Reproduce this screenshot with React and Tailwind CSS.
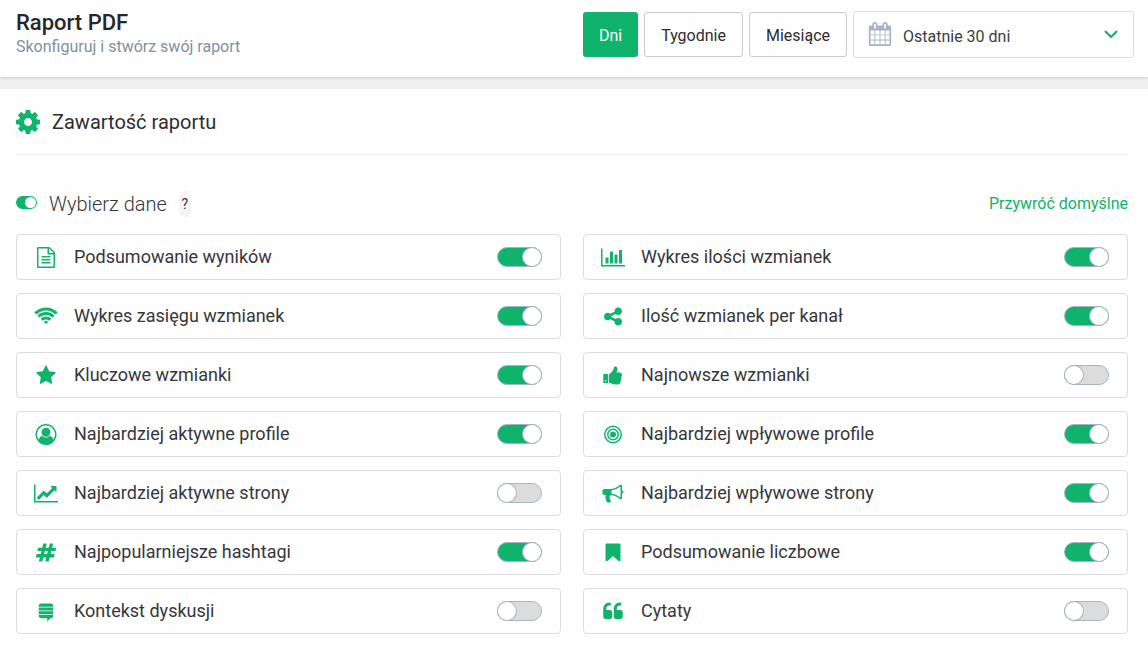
import { useState } from "react";

// viewBox is 1792 high, the wide glyphs are 2048 across
const paths = {
  cog: "M1152 896q0-106-75-181t-181-75-181 75-75 181 75 181 181 75 181-75 75-181zm512-109v222q0 12-8 23t-20 13l-185 28q-19 54-39 91 35 50 107 138 10 12 10 25t-9 23q-27 37-99 108t-94 71q-12 0-26-9l-138-108q-44 23-91 38-16 136-29 186-7 28-36 28h-222q-14 0-24.5-8.5t-11.5-21.5l-28-184q-49-16-90-37l-141 107q-10 9-25 9-14 0-25-11-126-114-165-168-7-10-7-23 0-12 8-23 15-21 51-66.5t54-70.5q-27-50-41-99l-183-27q-13-2-21-12.5t-8-23.5v-222q0-12 8-23t19-13l186-28q14-46 39-92-40-57-107-138-10-12-10-24 0-10 9-23 26-36 98.5-107.5t94.5-71.5q13 0 26 10l138 107q44-23 91-38 16-136 29-186 7-28 36-28h222q14 0 24.5 8.5t11.5 21.5l28 184q49 16 90 37l142-107q9-9 24-9 13 0 25 10 129 119 165 170 7 8 7 22 0 12-8 23-15 21-51 66.5t-54 70.5q26 50 41 98l183 28q13 2 21 12.5t8 23.5z",
  calendar:
    "M192 1664h288v-288h-288v288zm352 0h320v-288h-320v288zm-352-352h288v-320h-288v320zm352 0h320v-320h-320v320zm-352-384h288v-288h-288v288zm736 736h320v-288h-320v288zm-384-736h320v-288h-320v288zm768 736h288v-288h-288v288zm-384-352h320v-320h-320v320zm-352-864v-288q0-13-9.5-22.5t-22.5-9.5h-64q-13 0-22.5 9.5t-9.5 22.5v288q0 13 9.5 22.5t22.5 9.5h64q13 0 22.5-9.5t9.5-22.5zm736 864h288v-320h-288v320zm-384-384h320v-288h-320v288zm384 0h288v-288h-288v288zm32-480v-288q0-13-9.5-22.5t-22.5-9.5h-64q-13 0-22.5 9.5t-9.5 22.5v288q0 13 9.5 22.5t22.5 9.5h64q13 0 22.5-9.5t9.5-22.5zm384-64v1280q0 52-38 90t-90 38h-1408q-52 0-90-38t-38-90v-1280q0-52 38-90t90-38h128v-96q0-66 47-113t113-47h64q66 0 113 47t47 113v96h384v-96q0-66 47-113t113-47h64q66 0 113 47t47 113v96h128q52 0 90 38t38 90z",
  file: "M1596 380q28 28 48 76t20 88v1152q0 40-28 68t-68 28h-1344q-40 0-68-28t-28-68v-1600q0-40 28-68t68-28h896q40 0 88 20t76 48zm-444-244v376h376q-10-29-22-41l-313-313q-12-12-41-22zm384 1528v-1024h-416q-40 0-68-28t-28-68v-416h-768v1536h1280zm-1024-864q0-14 9-23t23-9h704q14 0 23 9t9 23v64q0 14-9 23t-23 9h-704q-14 0-23-9t-9-23v-64zm736 224q14 0 23 9t9 23v64q0 14-9 23t-23 9h-704q-14 0-23-9t-9-23v-64q0-14 9-23t23-9h704zm0 256q14 0 23 9t9 23v64q0 14-9 23t-23 9h-704q-14 0-23-9t-9-23v-64q0-14 9-23t23-9h704z",
  barChart:
    "M640 896v512h-256v-512h256zm384-512v1024h-256v-1024h256zm1024 1152v128h-2048v-1536h128v1408h1920zm-640-896v768h-256v-768h256zm384-384v1152h-256v-1152h256z",
  wifi: "M1024 1523q-20 0-93-73.5t-73-93.5q0-32 62.5-54t103.5-22 103.5 22 62.5 54q0 20-73 93.5t-93 73.5zm270-271q-2 0-40-25t-101.5-50-128.5-25-128.5 25-101 50-40.5 25q-18 0-93.5-75t-75.5-93q0-13 10-23 78-77 196-121t233-44 233 44 196 121q10 10 10 23 0 18-75.5 93t-93.5 75zm273-272q-11 0-23-8-136-105-252-154.5t-268-49.5q-85 0-170.5 22t-149 53-113.5 62-79 53-31 22q-17 0-92-75t-75-93q0-12 10-22 132-132 320-205t380-73 380 73 320 205q10 10 10 22 0 18-75 93t-92 75zm271-271q-11 0-22-9-179-157-371.5-236.5t-420.5-79.5-420.5 79.5-371.5 236.5q-11 9-22 9-17 0-92.5-75t-75.5-93q0-13 10-23 187-186 445-288t527-102 527 102 445 288q10 10 10 23 0 18-75.5 93t-92.5 75z",
  share:
    "M1344 1024q133 0 226.5 93.5t93.5 226.5-93.5 226.5-226.5 93.5-226.5-93.5-93.5-226.5q0-12 2-34l-360-180q-92 86-218 86-133 0-226.5-93.5t-93.5-226.5 93.5-226.5 226.5-93.5q126 0 218 86l360-180q-2-22-2-34 0-133 93.5-226.5t226.5-93.5 226.5 93.5 93.5 226.5-93.5 226.5-226.5 93.5q-126 0-218-86l-360 180q2 22 2 34t-2 34l360 180q92-86 218-86z",
  star: "M1728 647q0 22-26 48l-363 354 86 500q1 7 1 20 0 21-10.5 35.5t-30.5 14.5q-19 0-40-12l-449-236-449 236q-22 12-40 12-21 0-31.5-14.5t-10.5-35.5q0-6 2-20l86-500-364-354q-25-27-25-48 0-37 56-46l502-73 225-455q19-41 49-41t49 41l225 455 502 73q56 9 56 46z",
  thumb:
    "M320 1344q0-26-19-45t-45-19q-27 0-45.5 19t-18.5 45q0 27 18.5 45.5t45.5 18.5q26 0 45-18.5t19-45.5zm160-512v640q0 26-19 45t-45 19h-288q-26 0-45-19t-19-45v-640q0-26 19-45t45-19h288q26 0 45 19t19 45zm1184 0q0 86-55 149 15 44 15 76 3 76-43 137 17 56 0 117-15 57-54 94 9 112-49 181-64 76-197 78h-129q-66 0-144-15.5t-121.5-29-120.5-39.5q-123-43-158-44-26-1-45-19.5t-19-44.5v-641q0-25 18-43.5t43-20.5q24-2 76-59t101-121q68-87 101-120 18-18 31-48t17.5-48.5 13.5-60.5q7-39 12.5-61t19.5-52 34-50q19-19 45-19 46 0 82.5 10.5t60 26 40 40.5 24 45 12 50 5 45 .5 39q0 38-9.5 76t-19 60-27.5 56q-3 6-10 18t-11 22-8 24h277q78 0 135 57t57 135z",
  user: "M896 0q182 0 348 71t286 191 191 286 71 348q0 181-70.5 347t-190.5 286-286 191.5-349 71.5-349-71-285.5-191.5-190.5-286-71-347.5 71-348 191-286 286-191 348-71zm619 1351q149-205 149-455 0-156-61-298t-164-245-245-164-298-61-298 61-245 164-164 245-61 298q0 250 149 455 66-327 306-327 131 128 313 128t313-128q240 0 306 327zm-235-647q0-159-112.5-271.5t-271.5-112.5-271.5 112.5-112.5 271.5 112.5 271.5 271.5 112.5 271.5-112.5 112.5-271.5z",
  target:
    "M1152 896a256 256 0 1 1-512 0a256 256 0 1 1 512 0zM1408 896a512 512 0 1 0-1024 0a512 512 0 1 0 1024 0zM1280 896a384 384 0 1 1-768 0a384 384 0 1 1 768 0zM1664 896a768 768 0 1 0-1536 0a768 768 0 1 0 1536 0zM1536 896a640 640 0 1 1-1280 0a640 640 0 1 1 1280 0z",
  lineChart:
    "M2048 1536v128h-2048v-1536h128v1408h1920zm-128-1248v435q0 21-19.5 29.5t-35.5-7.5l-121-121-633 633q-10 10-23 10t-23-10l-233-233-416 416-192-192 585-585q10-10 23-10t23 10l233 233 464-464-121-121q-16-16-7.5-35.5t29.5-19.5h435q14 0 23 9t9 23z",
  bullhorn:
    "M1664 640q53 0 90.5 37.5t37.5 90.5-37.5 90.5-90.5 37.5v384q0 52-38 90t-90 38q-417-347-812-380-58 19-91 66t-31 100.5 40 92.5q-20 33-23 65.5t6 58 33.5 55 48 50 61.5 50.5q-29 58-111.5 83t-168.5 11.5-132-55.5q-7-23-29.5-87.5t-32-94.5-23-89-15-101 3.5-98.5 22-110.5h-122q-66 0-113-47t-47-113v-192q0-66 47-113t113-47h480q435 0 896-384 52 0 90 38t38 90v384zm-128 604v-954q-394 302-768 343v270q377 42 768 341z",
  hashtag:
    "M991 1024l64-256h-254l-64 256h254zm768-504l-56 224q-7 24-31 24h-327l-64 256h311q15 0 25 12 10 14 6 28l-56 224q-5 24-31 24h-327l-81 328q-7 24-31 24h-224q-16 0-26-12-9-12-6-28l78-312h-254l-81 328q-7 24-31 24h-225q-15 0-25-12-9-12-6-28l78-312h-311q-15 0-25-12-9-12-6-28l56-224q7-24 31-24h327l64-256h-311q-15 0-25-12-10-14-6-28l56-224q5-24 31-24h327l81-328q7-24 32-24h224q15 0 25 12 9 12 6 28l-78 312h254l81-328q7-24 32-24h224q15 0 25 12 9 12 6 28l-78 312h311q15 0 25 12 9 12 6 28z",
  bookmark:
    "M1420 128q23 0 44 9 33 13 52.5 41t19.5 62v1289q0 34-19.5 62t-52.5 41q-19 8-44 8-48 0-83-32l-441-424-441 424q-36 33-83 33-23 0-44-9-33-13-52.5-41t-19.5-62v-1289q0-34 19.5-62t52.5-41q21-9 44-9h1048z",
  stack:
    "M1515 1204v66q0 85-57.5 144.5t-138.5 59.5h-57l-260 269v-269h-529q-81 0-138.5-59.5t-57.5-144.5v-66h1238zm0-326v255h-1238v-255h1238zm0-328v255h-1238v-255h1238zm0-131v67h-1238v-67q0-84 57.5-143.5t138.5-59.5h846q81 0 138.5 59.5t57.5 143.5z",
  quote:
    "M832 960v384q0 80-56 136t-136 56h-384q-80 0-136-56t-56-136v-704q0-104 40.5-198.5t109.5-163.5 163.5-109.5 198.5-40.5h64q26 0 45 19t19 45v128q0 26-19 45t-45 19h-64q-106 0-181 75t-75 181v32q0 40 28 68t68 28h224q80 0 136 56t56 136zm896 0v384q0 80-56 136t-136 56h-384q-80 0-136-56t-56-136v-704q0-104 40.5-198.5t109.5-163.5 163.5-109.5 198.5-40.5h64q26 0 45 19t19 45v128q0 26-19 45t-45 19h-64q-106 0-181 75t-75 181v32q0 40 28 68t68 28h224q80 0 136 56t56 136z",
};

const Icon = ({ name, wide, className }) => (
  <svg
    viewBox={wide ? "0 0 2048 1792" : "0 0 1792 1792"}
    fill="currentColor"
    aria-hidden="true"
    className={className}
  >
    <path d={paths[name]} />
  </svg>
);

const sections = [
  { id: "summary", icon: "file", label: "Podsumowanie wyników", on: true },
  { id: "mentions", icon: "barChart", wide: true, label: "Wykres ilości wzmianek", on: true },
  { id: "reach", icon: "wifi", wide: true, label: "Wykres zasięgu wzmianek", on: true },
  { id: "channels", icon: "share", label: "Ilość wzmianek per kanał", on: true },
  { id: "key", icon: "star", label: "Kluczowe wzmianki", on: true },
  { id: "latest", icon: "thumb", label: "Najnowsze wzmianki", on: false },
  { id: "activeProfiles", icon: "user", label: "Najbardziej aktywne profile", on: true },
  { id: "topProfiles", icon: "target", label: "Najbardziej wpływowe profile", on: true },
  { id: "activeSites", icon: "lineChart", wide: true, label: "Najbardziej aktywne strony", on: false },
  { id: "topSites", icon: "bullhorn", label: "Najbardziej wpływowe strony", on: true },
  { id: "hashtags", icon: "hashtag", label: "Najpopularniejsze hashtagi", on: true },
  { id: "numbers", icon: "bookmark", label: "Podsumowanie liczbowe", on: true },
  { id: "context", icon: "stack", label: "Kontekst dyskusji", on: false },
  { id: "quotes", icon: "quote", label: "Cytaty", on: false },
];

const defaults = Object.fromEntries(sections.map((s) => [s.id, s.on]));

const periods = ["Dni", "Tygodnie", "Miesiące"];

const Header = () => {
  const [period, setPeriod] = useState("Dni");

  return (
    <header className="flex items-center justify-between bg-[#fefefe] pt-[11px] pr-[14px] pb-[19px] pl-4 shadow-[0_1px_3px_rgba(0,0,0,0.16)]">
      <div>
        <h1 className="text-[22px] leading-[24px] font-medium text-[#26262b]">
          Raport PDF
        </h1>
        <p className="text-base leading-[23px] text-[#82919d]">
          Skonfiguruj i stwórz swój raport
        </p>
      </div>
      <div className="flex items-center gap-[6px]">
        {periods.map((p) => (
          <button
            key={p}
            type="button"
            onClick={() => setPeriod(p)}
            className={
              p === period
                ? "h-[45px] rounded-[3px] bg-[#10b36c] px-4 pt-[3px] text-base text-white"
                : "h-[45px] rounded-[3px] border border-[#c9cbce] px-4 pt-[3px] text-base text-[#2d2d32]"
            }
          >
            {p}
          </button>
        ))}
        <div className="relative">
          <select
            aria-label="Zakres dat"
            className="block h-[47px] w-[281px] appearance-none rounded-[3px] border border-[#dcdddf] bg-transparent pt-1 pl-[49px] text-base text-[#3c3c40]"
          >
            <option>Ostatnie 30 dni</option>
          </select>
          <Icon
            name="calendar"
            className="pointer-events-none absolute top-[11px] left-[15px] size-6 text-[#a9b4c2]"
          />
          <svg
            viewBox="0 0 14 8"
            fill="none"
            stroke="#10b36c"
            strokeWidth="2"
            aria-hidden="true"
            className="pointer-events-none absolute top-[19px] right-4 h-2 w-[14px]"
          >
            <path d="M1 1l6 6 6-6" />
          </svg>
        </div>
      </div>
    </header>
  );
};

const Section = ({ section, checked, onChange }) => (
  <label className="flex h-[46px] cursor-pointer items-center rounded-[4px] border border-[#dcdddf] pr-[18px] pl-[17px]">
    <Icon
      name={section.icon}
      wide={section.wide}
      className="h-[21px] w-6 text-[#10b36c]"
    />
    <span className="ml-4 grow text-lg text-[#37373b]">{section.label}</span>
    <input
      type="checkbox"
      checked={checked}
      onChange={onChange}
      className="flex h-5 w-[45px] cursor-pointer appearance-none items-center rounded-full border border-[#a9b4c2] bg-[#dcdcdc] before:size-[18px] before:rounded-full before:bg-white before:shadow-[0_0_0_1px_#a9b4c2] checked:justify-end checked:bg-[#10b36c]"
    />
  </label>
);

export default function App() {
  const [enabled, setEnabled] = useState(defaults);
  const anyOn = Object.values(enabled).some(Boolean);

  const toggleAll = () =>
    setEnabled(Object.fromEntries(sections.map((s) => [s.id, !anyOn])));

  return (
    <div className="flex min-h-screen flex-col bg-[#f0f0f3] font-[Roboto,sans-serif]">
      <Header />
      <main className="mt-3 grow bg-[#fefefe] pr-5 pb-4 pl-4">
        <div className="flex h-[66px] items-center gap-[10px] border-b border-[#f0f0f3]">
          <Icon name="cog" className="-ml-[2px] size-7 text-[#10b36c]" />
          <h2 className="text-xl text-[#2d2d32]">Zawartość raportu</h2>
        </div>
        <div className="flex items-center pt-[35px] pb-4">
          <input
            type="checkbox"
            aria-label="Zaznacz wszystkie dane"
            checked={anyOn}
            onChange={toggleAll}
            className="mb-1 flex h-[13px] w-[21px] cursor-pointer appearance-none items-center rounded-full bg-[#dcdcdc] p-px before:size-[11px] before:rounded-full before:bg-white checked:justify-end checked:bg-[#10b36c]"
          />
          <h3 className="ml-3 text-xl font-light text-[#37373b]">
            Wybierz dane
          </h3>
          <button
            type="button"
            className="ml-3 h-[26px] w-3 rounded-[6px] bg-[#f4f4f5] text-sm text-[#37373b]"
          >
            ?
          </button>
          <button
            type="button"
            onClick={() => setEnabled(defaults)}
            className="ml-auto cursor-pointer text-base text-[#10b36c]"
          >
            Przywróć domyślne
          </button>
        </div>
        <div className="grid grid-cols-2 gap-x-[22px] gap-y-[13px]">
          {sections.map((s) => (
            <Section
              key={s.id}
              section={s}
              checked={enabled[s.id]}
              onChange={() => setEnabled({ ...enabled, [s.id]: !enabled[s.id] })}
            />
          ))}
        </div>
      </main>
    </div>
  );
}
